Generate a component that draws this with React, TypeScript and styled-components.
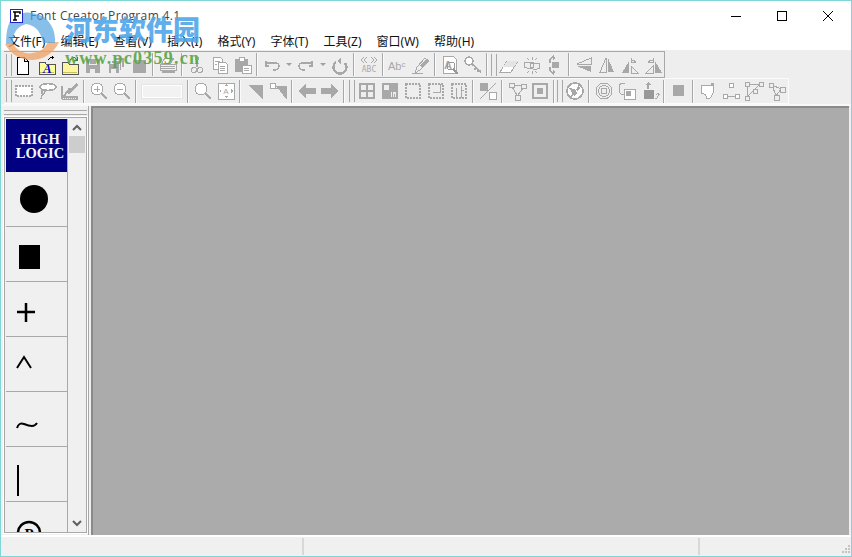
import React from "react";
import styled, { createGlobalStyle } from "styled-components";

const Global = createGlobalStyle`
  html, body { margin: 0; padding: 0; background: #f0f0f0; overflow: hidden; }
  #root { width: 852px; height: 557px; }
`;

const Win = styled.div`
  position: relative; width: 852px; height: 557px; box-sizing: border-box; overflow: hidden;
  border: 1px solid #7fd6d6; background: #f0f0f0; display: flex; flex-direction: column;
  font-family: "Noto Sans", "Noto Sans CJK SC", sans-serif; font-size: 12px; color: #000;
`;
const TitleBar = styled.div`
  flex: none; height: 29px; background: #fff; display: flex; align-items: center;
`;
const AppIcon = styled.svg`flex: none; width: 13px; height: 14px; margin: 0 7px 0 9px; position: relative; z-index: 2;`;
const TitleText = styled.span`flex: 1; font-size: 12px; color: #444; letter-spacing: 0.35px; font-family: "Open Sans", sans-serif;`;
const WinBtn = styled.div`
  flex: none; width: 46px; height: 29px; display: flex; align-items: center; justify-content: center;
`;
const MenuBar = styled.div`
  flex: none; height: 20px; background: #fff; display: flex; align-items: center; padding-top: 4px; box-sizing: border-box;
`;
const MenuItem = styled.span`padding: 0 7.55px; white-space: nowrap; line-height: 16px; color: #111; font-size: 12px;
  &:first-child { padding-left: 7px; }
`;
const Bars = styled.div`
  flex: none; height: 54px; background: #eeeeee; padding-top: 1px; box-sizing: border-box;
  display: flex; flex-direction: column;
`;
const Toolbar = styled.div<{ $line: string; $h: number }>`
  width: fit-content; height: ${p => p.$h}px; box-sizing: border-box; margin-left: 3px; display: flex; align-items: center;
  border-top: 1px solid ${p => p.$line}; border-bottom: 1px solid ${p => p.$line}; border-right: 1px solid ${p => p.$line};
  padding-left: 1px;
`;
const Grip = styled.div<{ $ml: number; $w: number }>`
  flex: none; box-sizing: border-box; width: ${p => p.$w}px; height: 22px; margin-left: ${p => p.$ml}px;
  border-left: 1px solid #a8a8a8; border-right: 1px solid #a8a8a8;
`;
const Sep = styled.div`
  flex: none; width: 2px; height: 23px; margin: 0 2px; background: linear-gradient(90deg, #a8a8a8 50%, #fafafa 50%);
`;
const Btn = styled.div`
  flex: none; width: 23px; height: 22px; display: flex; align-items: center; justify-content: center;
`;
const Drop = styled.div`
  flex: none; width: 11px; height: 22px; display: flex; align-items: center; justify-content: center;
  &::after { content: ""; border-left: 3px solid transparent; border-right: 3px solid transparent; border-top: 3px solid #a0a0a0; }
`;
const InputBox = styled.div`
  flex: none; width: 42px; height: 15px; margin: 0 2px; box-sizing: border-box; border: 1px solid #e4e4e4; background: #f2f2f2;
  box-shadow: inset 0 0 0 1px #fff;
`;
const Main = styled.div`
  flex: 1; min-height: 0; display: flex; border-top: 2px solid #f8f8f8; background: #f0f0f0;
`;
const Dock = styled.div`
  flex: none; width: 88px; box-sizing: border-box; padding: 4px 1px 0 3px; border-right: 1px solid #a8a8a8; display: flex; flex-direction: column;
`;
const DockGrip = styled.div`
  flex: none; box-sizing: border-box; height: 5px; border-top: 1px solid #a8a8a8; border-bottom: 1px solid #a8a8a8;
`;
const DockInner = styled.div`
  flex: 1; min-height: 0; margin-top: 2px; border: 1px solid #a8a8a8; box-shadow: 0 0 0 1px #fff; display: flex; padding: 1px 0 0 1px;
  margin-bottom: 2px; box-sizing: border-box;
`;
const GlyphList = styled.div`
  flex: none; width: 61px; overflow: hidden; border-right: 1px solid #a8a8a8;
`;
const Glyph = styled.div`
  height: 55px; box-sizing: border-box; border-bottom: 1px solid #a8a8a8;
  svg { display: block; }
`;
const LogoCell = styled.div`
  height: 53px; background: #000080; color: #f4f4f4; display: flex; flex-direction: column; align-items: center; justify-content: center;
  font-family: "Liberation Serif", serif; font-weight: 700; font-size: 14.5px; line-height: 14px; padding-left: 7px; box-sizing: border-box;
`;
const LogoLine = styled.span``;
const ScrollBar = styled.div`
  flex: 1; display: flex; flex-direction: column; align-items: stretch; background: #f0f0f0;
`;
const ScrollArrow = styled.div`flex: none; height: 17px; display: flex; align-items: center; justify-content: center;`;
const Thumb = styled.div`flex: none; height: 17px; margin: 0 1px; background: #cdcdcd;`;
const ScrollFill = styled.div`flex: 1;`;
const Workspace = styled.div`
  flex: 1; margin-left: 2px; background: #ababab; border-top: 2px solid #8a8a8a; border-left: 2px solid #8a8a8a; margin-right: 2px;
`;
const Status = styled.div`
  flex: none; height: 19px; display: grid; grid-template-columns: 303px 396px 1fr; background: #f0f0f0; border-top: 2px solid #fff;
  position: relative;
`;
const StatusCell = styled.div`
  border-right: 2px solid #d8d8d8; margin: 1px 0;
  &:last-of-type { border-right: none; }
`;
const ResizeGrip = styled.svg`position: absolute; right: 1px; bottom: 1px; width: 10px; height: 10px;`;
const Watermark = styled.div`
  position: absolute; left: -1px; top: -1px; width: 220px; height: 80px; pointer-events: none;
`;
const WmLogo = styled.svg`position: absolute; left: 0; top: 0; width: 70px; height: 70px;`;
const WmCn = styled.div`
  position: absolute; left: 65px; top: 11px; font-family: "Noto Sans CJK SC", sans-serif; font-weight: 900; font-size: 27px; line-height: 36px;
  color: #4fa6e8; opacity: .9; white-space: nowrap;
`;
const WmUrl = styled.div`
  position: absolute; left: 65px; top: 49px; font-family: "Liberation Serif", serif; font-weight: 700; font-size: 18px; line-height: 18px;
  color: #5aa646; opacity: .9; letter-spacing: 1.25px; white-space: nowrap;
`;

const G = "#a8a8a8";
const Gd = "#989898";

const folder = (fill: string) => (
  <>
    <path d="M2 7h6l1 2h9v10H2z" fill={fill} stroke="#555" />
    <path d="M3 17h14v1H3z" fill="#c8c060" />
  </>
);
const Ic: Record<string, React.ReactNode> = {
  new: <path d="M3 2h7l4 4v13H3zM10 2v4h4" fill="#fff" stroke="#000" />,
  openA: <>{folder("#ffff99")}<path d="M11 5l3-3h3M15 1v3" stroke="#000" fill="none" /><text x="6" y="18" fontSize="13" fontWeight="700" fontStyle="italic" fontFamily="Liberation Serif" fill="#0000e0">A</text></>,
  open: <>{folder("#fff5a0")}<path d="M10 5q2-3 5-2l2 2m0-3v3h-3" stroke="#2c8a2c" fill="none" /></>,
  save: <><path d="M3 4h14v14H3z" fill={G} /><path d="M6 5h8v5H6zM7 14h5v4H7z" fill="#eee" /><path d="M7 5h6v4H7z" fill={G} /></>,
  saveAll: <><path d="M8 2h10v10H8z" fill={G} stroke="#eee" /><path d="M5 5h10v10H5z" fill={G} stroke="#eee" /><path d="M2 8h11v10H2z" fill={G} stroke="#eee" /><path d="M5 14h5v4H5z" fill="#eee" /></>,
  stopDoc: <path d="M4 5h13v13H4z" fill={G} />,
  print: <><path d="M7 3h9l-3 5H4z" fill="#fff" stroke={G} /><path d="M2 9h16v6H2z" fill="#f0f0f0" stroke={G} /><path d="M3 11h14M3 13h14" stroke={G} /><path d="M4 15h13v3H4z" fill={G} /></>,
  cut: <><path d="M8 2l3 10M12 2L9 12" stroke={G} fill="none" /><circle cx="7" cy="15" r="2.5" fill="none" stroke={G} /><circle cx="13" cy="15" r="2.5" fill="none" stroke={G} /></>,
  copy: <><path d="M3 2h7l2 2v10H3z" fill="#fff" stroke={G} /><path d="M8 7h7l2 2v9H8z" fill="#fff" stroke={G} /><path d="M5 6h5M5 9h2M10 11h5M10 13h5M10 15h5" stroke={G} /></>,
  paste: <><path d="M2 4h13v13H2z" fill={G} /><path d="M6 2h5v4H6z" fill="#fff" stroke={G} /><path d="M9 10h9v8H9z" fill="#fff" stroke={G} /><path d="M11 13h5M11 15h5" stroke={G} /></>,
  undo: <><path d="M4 8h9q4 0 4 3t-4 4h-2" fill="none" stroke={G} strokeWidth="1.5" /><path d="M3 6h2v6H3zM5 7h3v2H5zM5 10h2v2H5z" fill={G} /></>,
  redo: <><path d="M16 8H7q-4 0-4 3t4 4h2" fill="none" stroke={G} strokeWidth="1.5" /><path d="M15 6h2v6h-2zM12 7h3v2h-3zM13 10h2v2h-2z" fill={G} /></>,
  refresh: <><path d="M6 7a6.5 6.5 0 1 0 9 1" fill="none" stroke={G} strokeWidth="2.4" /><path d="M11 2v8l-4-4z" fill={G} /></>,
  abc: <><path d="M5 2L2 5l3 3M8 2L5 5l3 3M12 2l3 3-3 3M15 2l3 3-3 3" fill="none" stroke={G} /><text x="10" y="17" textAnchor="middle" fontSize="8" fontFamily="DejaVu Sans Mono" fill={G}>ABC</text></>,
  abcSmall: <text x="0" y="15" fontSize="11" fontFamily="Liberation Sans" fill={G}>Ab<tspan fontSize="8" dy="-3">c</tspan></text>,
  pen: <><path d="M1 18h11" stroke={G} /><path d="M4 18l2-6 8-9 4 3-9 9z" fill="#eee" stroke={G} /><path d="M9 11l6-7 2 2-6 7z" fill={G} /></>,
  docFind: <><path d="M3 1h10l3 3v14H3z" fill="#fff" stroke={G} /><text x="4" y="14" fontSize="11" fontWeight="700" fontFamily="Liberation Sans" fill={G}>A</text><circle cx="11" cy="11" r="4" fill="none" stroke={Gd} /><path d="M13 14l5 5" stroke={Gd} strokeWidth="2" /></>,
  key: <><circle cx="6" cy="6" r="4" fill="#fff" stroke={G} strokeWidth="1.4" /><path d="M9 9l9 8M13 13l-2 2M16 15l-2 2" stroke={G} strokeWidth="1.6" fill="none" /></>,
  eraser: <><path d="M1 17l7-11h11l-7 11z" fill="#fff" stroke={G} /><path d="M8 6h11l-4 6H4z" fill="#e4e4e4" /></>,
  link: <><rect x="2" y="7" width="10" height="6" rx="3" fill="none" stroke={G} /><rect x="8" y="8" width="10" height="6" rx="3" fill="none" stroke={G} /><path d="M5 3l2 2M10 2v3M15 3l-2 2M5 18l2-2M10 19v-3M15 18l-2-2" stroke={G} /></>,
  align: <><path d="M9 1Q4 3 5 8M9 19q-5-2-4-7" fill="none" stroke={G} strokeWidth="1.5" /><path d="M7 7h7v6H7z" fill={G} /><path d="M8 1l3 2-3 2zM8 15l3 2-3 2z" fill={G} /></>,
  flipV: <><path d="M3 9l14-6v6z" fill="none" stroke={G} /><path d="M3 11h14v6z" fill={G} /></>,
  flipH: <><path d="M9 3v14H3z" fill="none" stroke={G} /><path d="M11 3l6 14h-6z" fill={G} /></>,
  rotL: <><path d="M9 6v12H2z" fill={G} /><path d="M11 11v7h7z" fill="none" stroke={G} /><path d="M11 6q3-2 5 2M11 3v4h4" fill="none" stroke={G} /></>,
  rotR: <><path d="M12 6v12h7z" fill={G} /><path d="M10 11v7H3z" fill="none" stroke={G} /><path d="M10 6Q7 4 5 8M10 3v4H6" fill="none" stroke={G} /></>,
  rectSel: <path d="M2 5h16v10H2z" fill="#fff" stroke={G} strokeDasharray="2 1" strokeWidth="1.5" />,
  lasso: <><ellipse cx="11" cy="6" rx="8" ry="3.5" fill="#fff" stroke={G} strokeWidth="1.8" /><path d="M5 9q1 5-1 9M8 10q0 3-3 4" fill="none" stroke={G} strokeWidth="1.4" /></>,
  ruler: <><path d="M2 18L10 7M2 5v13" stroke={G} strokeWidth="2" fill="none" /><path d="M2 15h16v4H2z" fill={G} /><path d="M7 12l9-10 2 2-9 10z" fill={G} /><path d="M3 17h14" stroke="#eee" strokeDasharray="1 1" /></>,
  zoomIn: <><circle cx="8" cy="8" r="6" fill="#fff" stroke={G} /><path d="M5 8h6M8 5v6" stroke={G} /><path d="M12 12l6 6" stroke={G} strokeWidth="2.2" /></>,
  zoomOut: <><circle cx="8" cy="8" r="6" fill="#fff" stroke={G} /><path d="M5 8h6" stroke={G} /><path d="M12 12l6 6" stroke={G} strokeWidth="2.2" /></>,
  zoom: <><circle cx="8" cy="8" r="6" fill="#fff" stroke={G} /><path d="M12 12l6 6" stroke={G} strokeWidth="2.2" /></>,
  fit: <><path d="M2 2h16v16H2z" fill="#fff" stroke={G} /><path d="M10 3l2 2H8zM10 17l2-2H8zM3 10l2-2v4zM17 10l-2-2v4z" fill={G} /><text x="10" y="13" textAnchor="middle" fontSize="8" fontFamily="Liberation Sans" fill={G}>A</text></>,
  triA: <path d="M3 4h15v15z" fill={G} />,
  triB: <><path d="M8 5h11v14z" fill={G} /><path d="M2 2h5v5H2z" fill="#fff" stroke={G} /><path d="M7 7l4 0" stroke={G} /></>,
  left: <path d="M1 10l8-7v4h10v6H9v4z" fill={G} />,
  right: <path d="M19 10l-8-7v4H1v6h10v4z" fill={G} />,
  grid1: <path d="M3 3h14v14H3zM10 3v14M3 10h14" fill="none" stroke={G} strokeWidth="2" />,
  grid2: <><path d="M3 3h14v14H3zM10 3v14M3 10h14" fill="none" stroke={G} strokeWidth="2" /><path d="M11 4h5v5h-5zM4 11h5v5H4z" fill={G} /><path d="M12 11v5M14 13v3" stroke={G} /></>,
  grid3: <path d="M3 3h14v14H3z" fill="none" stroke={G} strokeWidth="2" strokeDasharray="2 1" />,
  grid4: <><path d="M3 3h14v14H3z" fill="none" stroke={G} strokeWidth="2" strokeDasharray="2 1" /><path d="M14 3v8H7" fill="none" stroke={G} /></>,
  grid5: <><path d="M3 3h14v14H3z" fill="none" stroke={G} strokeWidth="2" strokeDasharray="2 1" /><path d="M7 17V7M12 17V5M12 9h3" fill="none" stroke={G} /></>,
  pct: <><path d="M2 2h8v8H2z" fill={G} /><path d="M11 11h7v7h-7z" fill="#fff" stroke={G} /><path d="M18 2L2 18" stroke={G} /></>,
  nodes: <path d="M2 2h5v4H2zM14 3h5v4h-5zM8 14h5v5H8zM7 4l7 1M5 6l5 8M16 7l-5 7" fill="none" stroke={G} />,
  target: <><path d="M3 3h14v14H3z" fill="none" stroke={G} strokeWidth="2" /><path d="M7 7h6v6H7z" fill={G} /></>,
  globe: <><circle cx="10" cy="10" r="8" fill="#fff" stroke={G} strokeWidth="1.8" /><path d="M4 7l6 1 2 4-3 3zM13 3l2 4-3 3z" fill={G} /><path d="M14 5L6 16" stroke={G} /></>,
  rings: <><circle cx="10" cy="10" r="8" fill="none" stroke={G} /><circle cx="10" cy="10" r="5.500" fill="none" stroke={G} /><circle cx="10" cy="10" r="3" fill="none" stroke={G} /></>,
  overlap: <><path d="M8 2H4L2 5v6l2 2h8l2-2V8" fill="none" stroke={G} /><path d="M7 8h11v10H7z" fill="#fff" stroke={G} /><path d="M9 10h5v5H9z" fill={G} /></>,
  move: <><path d="M4 9h10v9H4z" fill={Gd} /><path d="M8 1l3 3H9v4H7V4H5z" fill={G} /><path d="M15 18q4-1 3-6m-2 2l2-2 2 2" fill="none" stroke={G} /></>,
  stop: <path d="M4 4h11v11H4z" fill={G} />,
  pathA: <><path d="M3 4h12v8q-2 6-6 6-1-6-6-6z" fill="#fff" stroke={G} /><path d="M13 2h3v3h-3z" fill={G} /></>,
  pathB: <path d="M8 2h4v4H8zM2 13h4v4H2zM14 13h4v4h-4zM6 15h8" fill="#fff" stroke={G} />,
  pathC: <><path d="M3 3v13M3 3h13M3 16L16 3" stroke={G} fill="none" /><path d="M1 1h4v4H1zM1 15h4v4H1zM9 8h4v4H9zM15 1h4v4h-4z" fill="#eee" stroke={G} /></>,
  pathD: <><path d="M5 4l9 4M5 4l4 11M14 8l-5 7" stroke={G} fill="none" /><path d="M2 2h4v4H2zM13 6h5v5h-5zM7 14h5v5H7z" fill="#eee" stroke={G} /></>,
};

type Part = string;
const Row1: Part[] = ["|2","new","openA","open","save","saveAll","stopDoc","-","print","-","cut","copy","paste","-","undo","v","redo","v","refresh","-","abc","-","abcSmall","pen","-","docFind","key","-","|1","eraser","link","align","-","flipV","flipH","rotL","rotR"];
const Row2: Part[] = ["|2","rectSel","lasso","ruler","-","zoomIn","zoomOut","-","#","-","zoom","fit","-","triA","triB","-","left","right","-","|2b","grid1","grid2","grid3","grid4","grid5","-","pct","-","nodes","target","-","|0","globe","-","rings","overlap","move","-","stop","-","pathA","pathB","pathC","pathD"];

const renderPart = (p: Part, i: number) => {
  if (p === "|2" && i === 0) return <Grip key={i} $ml={1} $w={6} />;
  if (p[0] === "|") return <Grip key={i} $ml={parseInt(p.slice(1), 10)} $w={6} />;
  if (p === "-") return <Sep key={i} />;
  if (p === "v") return <Drop key={i} />;
  if (p === "#") return <InputBox key={i} />;
  return <Btn key={i}><svg width="20" height="20" viewBox="0 0 20 20" shapeRendering="crispEdges">{Ic[p]}</svg></Btn>;
};

const menus = ["文件(F)", "编辑(E)", "查看(V)", "插入(I)", "格式(Y)", "字体(T)", "工具(Z)", "窗口(W)", "帮助(H)"];

export default function App() {
  return (
    <Win>
      <Global />
      <TitleBar>
        <AppIcon viewBox="0 0 13 14">
          <rect x="0.5" y="0.5" width="12" height="13" fill="#fff" stroke="#2222cc" />
          <path d="M3 3h7v2M5 3v8M3 11h4M5 7h4" fill="none" stroke="#000" strokeWidth="1.5" />
        </AppIcon>
        <TitleText>Font Creator Program 4.1</TitleText>
        <WinBtn><svg width="12" height="12" viewBox="0 0 12 12"><path d="M1 6.500h10" stroke="#000" /></svg></WinBtn>
        <WinBtn><svg width="12" height="12" viewBox="0 0 12 12"><rect x="1.5" y="1.5" width="9" height="9" fill="none" stroke="#000" /></svg></WinBtn>
        <WinBtn><svg width="12" height="12" viewBox="0 0 12 12"><path d="M1 1l10 10M11 1L1 11" stroke="#000" /></svg></WinBtn>
      </TitleBar>
      <MenuBar>{menus.map(m => <MenuItem key={m}>{m}</MenuItem>)}</MenuBar>
      <Bars>
        <Toolbar $line="#a8a8a8" $h={27}>{Row1.map(renderPart)}</Toolbar>
        <Toolbar $line="#fbfbfb" $h={26}>{Row2.map(renderPart)}</Toolbar>
      </Bars>
      <Main>
        <Dock>
          <DockGrip />
          <DockInner>
            <GlyphList>
              <LogoCell>
                <LogoLine>HIGH</LogoLine>
                <LogoLine>LOGIC</LogoLine>
              </LogoCell>
              <Glyph><svg width="61" height="54"><circle cx="28" cy="27" r="14" /></svg></Glyph>
              <Glyph><svg width="61" height="54"><rect x="13" y="18" width="21" height="24" /></svg></Glyph>
              <Glyph><svg width="61" height="54"><path d="M11 30h18M20 21v19" stroke="#000" strokeWidth="2.5" /></svg></Glyph>
              <Glyph><svg width="61" height="54"><path d="M11 31l7-11 7 11" fill="none" stroke="#000" strokeWidth="2" /></svg></Glyph>
              <Glyph><svg width="61" height="54"><path d="M11 36q2-6 7-4t8 2 5-3" fill="none" stroke="#000" strokeWidth="2" /></svg></Glyph>
              <Glyph><svg width="61" height="54"><rect x="11" y="18" width="2" height="31" /></svg></Glyph>
              <Glyph>
                <svg width="61" height="54">
                  <circle cx="23" cy="31" r="11" fill="none" stroke="#000" strokeWidth="2.5" />
                  <text x="23" y="37" textAnchor="middle" fontSize="15" fontWeight="700" fontFamily="Liberation Serif">P</text>
                </svg>
              </Glyph>
            </GlyphList>
            <ScrollBar>
              <ScrollArrow><svg width="10" height="7" viewBox="0 0 10 7"><path d="M1 6l4-4 4 4" fill="none" stroke="#606060" strokeWidth="2" /></svg></ScrollArrow>
              <Thumb />
              <ScrollFill />
              <ScrollArrow><svg width="10" height="7" viewBox="0 0 10 7"><path d="M1 1l4 4 4-4" fill="none" stroke="#606060" strokeWidth="2" /></svg></ScrollArrow>
            </ScrollBar>
          </DockInner>
        </Dock>
        <Workspace />
      </Main>
      <Status>
        <StatusCell />
        <StatusCell />
        <StatusCell />
        <ResizeGrip viewBox="0 0 10 10">
          <path d="M8 0h2v2H8zM5 3h2v2H5zM8 3h2v2H8zM2 6h2v2H2zM5 6h2v2H5zM8 6h2v2H8z" fill="#c4c4c4" />
        </ResizeGrip>
      </Status>
      <Watermark>
        <WmLogo viewBox="0 0 70 70">
          <path d="M5 44A30 30 0 0 0 59 42L48 42A20 20 0 0 1 13 44z" fill="#f0a468" opacity=".78" />
          <path d="M43 43h12q1-16-11-26Q28 9 15 15 6 22 6 44h7q-1-16 13-20 14 2 17 19z" fill="#4f9fe0" opacity=".68" />
        </WmLogo>
        <WmCn>河东软件园</WmCn>
        <WmUrl>www.pc0359.cn</WmUrl>
      </Watermark>
    </Win>
  );
}
